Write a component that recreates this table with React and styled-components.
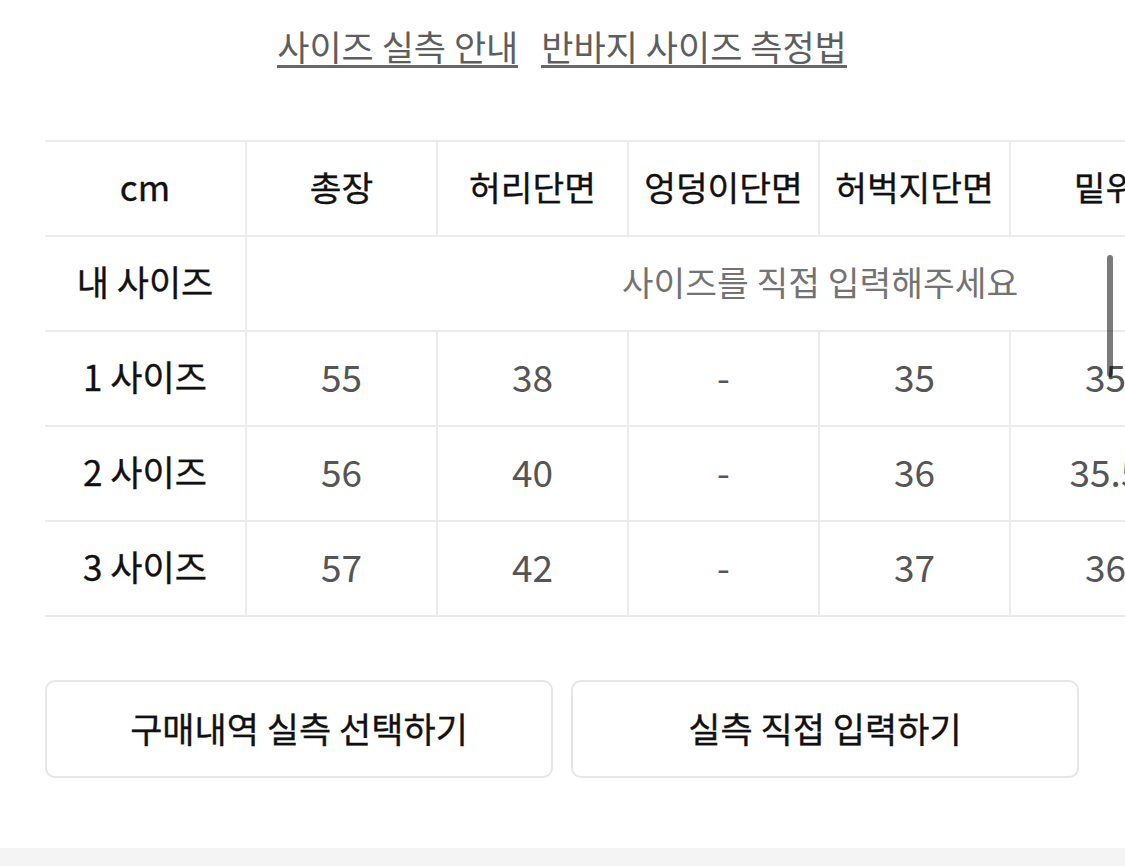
import React from 'react';
import styled, { createGlobalStyle } from 'styled-components';

const GlobalStyle = createGlobalStyle`
  html, body {
    margin: 0;
    padding: 0;
    background: #fff;
  }
  body {
    font-family: "Noto Sans CJK KR", "Noto Sans", sans-serif;
    color: #111;
  }
`;

const Page = styled.div`
  width: 1125px;
  height: 866px;
  overflow: hidden;
  display: flex;
  flex-direction: column;
`;

const Content = styled.div`
  flex: 1;
  padding: 0 46px 0 45px;
`;

const LinkRow = styled.div`
  display: flex;
  justify-content: center;
  gap: 23px;
  padding-top: 28px;
`;

const GuideLink = styled.a`
  font-size: 35px;
  line-height: 35px;
  padding-bottom: 2px;
  color: #5e5e5e;
  text-decoration: none;
  border-bottom: 3px solid #686868;
`;

const TableScroll = styled.div`
  position: relative;
  margin-top: 72px;
  margin-right: -46px;
  overflow: hidden;
`;

const Table = styled.div`
  width: max-content;
  border-top: 2px solid #ebebeb;
`;

const Row = styled.div`
  display: flex;
  height: 95px;
  box-sizing: border-box;
  border-bottom: 2px solid #ebebeb;
`;

const Cell = styled.div`
  width: ${p => p.$w || 191}px;
  box-sizing: border-box;
  padding-bottom: 6px;
  border-right: ${p => (p.$noLine ? 'none' : '2px solid #ebebeb')};
  display: flex;
  align-items: center;
  justify-content: center;
  font-size: ${p => p.$size || 37}px;
  color: ${p => (p.$head ? '#111' : p.$muted ? '#737373' : '#555')};
  -webkit-text-stroke: ${p => (p.$head ? '0.35px #111' : '0')};
  white-space: nowrap;
`;

const ScrollThumb = styled.div`
  position: absolute;
  left: 1062px;
  top: 115px;
  width: 6px;
  height: 122px;
  border-radius: 3px;
  background: rgba(0, 0, 0, 0.52);
`;

const ButtonRow = styled.div`
  display: flex;
  gap: 18px;
  margin-top: 63px;
`;

const ActionButton = styled.button`
  flex: 1;
  height: 98px;
  padding: 0 0 4px;
  background: #fff;
  border: 2px solid #e6e6e6;
  border-radius: 10px;
  font-family: inherit;
  font-size: 35px;
  color: #111;
  -webkit-text-stroke: 0.35px #111;
`;

const Footer = styled.div`
  height: 18px;
  background: #f4f4f4;
`;

const columns = ['총장', '허리단면', '엉덩이단면', '허벅지단면', '밑위', '밑단단면'];

const sizes = [
  { name: '1 사이즈', values: ['55', '38', '-', '35', '35', '25'] },
  { name: '2 사이즈', values: ['56', '40', '-', '36', '35.5', '26'] },
  { name: '3 사이즈', values: ['57', '42', '-', '37', '36', '27'] },
];

export default function App() {
  return (
    <Page>
      <GlobalStyle />
      <Content>
        <LinkRow>
          <GuideLink>사이즈 실측 안내</GuideLink>
          <GuideLink>반바지 사이즈 측정법</GuideLink>
        </LinkRow>

        <TableScroll>
          <Table>
            <Row>
              <Cell $w={202} $head $size={35}>cm</Cell>
              {columns.map(c => (
                <Cell key={c} $head $size={34.5}>{c}</Cell>
              ))}
            </Row>
            <Row>
              <Cell $w={202} $head $size={35}>내 사이즈</Cell>
              <Cell $w={191 * columns.length} $noLine $muted $size={34.5}>
                사이즈를 직접 입력해주세요
              </Cell>
            </Row>
            {sizes.map(s => (
              <Row key={s.name}>
                <Cell $w={202} $head $size={35}>{s.name}</Cell>
                {s.values.map((v, i) => (
                  <Cell key={i}>{v}</Cell>
                ))}
              </Row>
            ))}
          </Table>
          <ScrollThumb />
        </TableScroll>

        <ButtonRow>
          <ActionButton>구매내역 실측 선택하기</ActionButton>
          <ActionButton>실측 직접 입력하기</ActionButton>
        </ButtonRow>
      </Content>
      <Footer />
    </Page>
  );
}
